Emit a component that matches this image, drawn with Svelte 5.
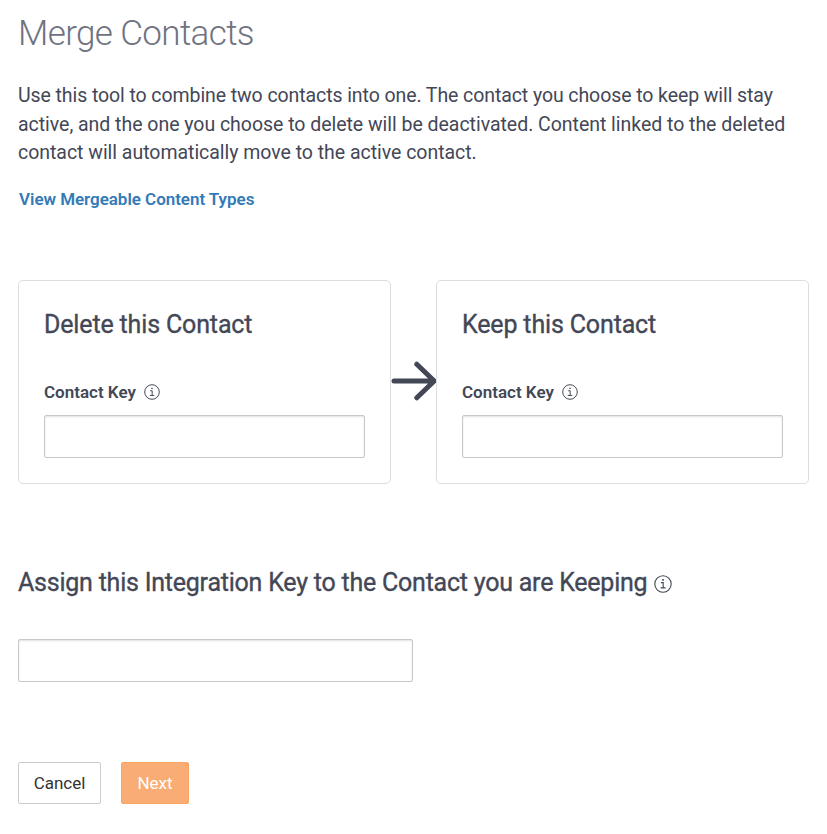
<script lang="ts">
  let integrationKey = $state('');

  const contacts = $state([
    { id: 'delete', title: 'Delete this Contact', key: '' },
    { id: 'keep', title: 'Keep this Contact', key: '' },
  ]);
</script>

{#snippet infoIcon()}
  <svg class="info" viewBox="0 0 18 18" aria-hidden="true">
    <circle cx="9" cy="9" r="8.2" />
    <path d="M6.9 7.6h2.3v5M6.6 12.9h5" />
    <path class="dot" d="M8.2 4.1h1.6v1.6H8.2z" />
  </svg>
{/snippet}

<main class="merge">
  <h1>Merge Contacts</h1>
  <p class="intro">
    <span class="lead">Use this tool to combine two contacts into one. The contact you choose to keep will stay</span>
    <span>active, and the one you choose to delete will be deactivated. Content linked to the deleted</span>
    <span>contact will automatically move to the active contact.</span>
  </p>
  <a class="types-link" href="#types">View Mergeable Content Types</a>

  <div class="cards">
    {#each contacts as contact, i}
      {#if i > 0}
        <svg class="arrow" viewBox="0 0 46 40" aria-hidden="true">
          <path d="M3 20h40M25.8 3.2 43.2 20 25.8 36.8" />
        </svg>
      {/if}
      <section class="card">
        <h2>{contact.title}</h2>
        <label for={contact.id}><span>Contact Key</span> {@render infoIcon()}</label>
        <input id={contact.id} type="text" bind:value={contact.key} />
      </section>
    {/each}
  </div>

  <h2 class="assign"><span>Assign this Integration Key to the Contact you are Keeping</span> {@render infoIcon()}</h2>
  <input class="integration" type="text" aria-label="Integration Key" bind:value={integrationKey} />

  <div class="actions">
    <button type="button" class="btn">Cancel</button>
    <button type="button" class="btn btn-primary">Next</button>
  </div>
</main>

<style>
  :global(body) {
    background: #fff;
  }

  .merge {
    box-sizing: border-box;
    width: 827px;
    height: 834px;
    padding: 13px 18px 0;
    font-family: Roboto, 'Liberation Sans', sans-serif;
    color: #434756;
  }

  h1 {
    margin: 0;
    font-size: 35px;
    line-height: 42px;
    font-weight: 300;
    letter-spacing: -0.62px;
    color: #70737f;
  }

  .intro {
    margin: 27px 0 0;
    font-size: 19.5px;
    line-height: 28.5px;
    font-weight: 400;
    letter-spacing: -0.03px;
  }

  .intro span {
    display: block;
    white-space: nowrap;
  }

  .intro .lead {
    letter-spacing: -0.085px;
  }

  .types-link {
    display: block;
    width: max-content;
    margin: 19px 0 0 1px;
    font-size: 17px;
    line-height: 24px;
    font-weight: 600;
    letter-spacing: -0.04px;
    color: #337ab7;
    text-decoration: none;
  }

  .cards {
    display: flex;
    align-items: center;
    margin-top: 69px;
  }

  .card {
    box-sizing: border-box;
    width: 373px;
    height: 204px;
    padding: 26px 25px 25px;
    border: 1px solid #ddd;
    border-radius: 5px;
  }

  .arrow {
    width: 46px;
    height: 40px;
    margin: 0 -1px 2px 0;
    flex: none;
  }

  .arrow path {
    fill: none;
    stroke: #434756;
    stroke-width: 5;
    stroke-linecap: round;
    stroke-linejoin: round;
  }

  h2 {
    margin: 0;
    font-size: 25px;
    line-height: 36px;
    font-weight: 400;
    letter-spacing: -0.15px;
    -webkit-text-stroke: 0.35px #434756;
    white-space: nowrap;
  }

  label {
    display: flex;
    align-items: center;
    gap: 8px;
    height: 24px;
    margin: 37px 0 11px;
    font-size: 17px;
    font-weight: 600;
  }

  .info {
    width: 16px;
    height: 16px;
    flex: none;
  }

  .info circle,
  .info path {
    fill: none;
    stroke: #434756;
    stroke-width: 1.1;
  }

  .info .dot {
    fill: #434756;
    stroke: none;
  }

  input {
    display: block;
    box-sizing: border-box;
    width: 100%;
    height: 43px;
    padding: 6px 12px;
    border: 1px solid #c8c8c8;
    border-radius: 2px;
    box-shadow: inset 0 1px 2px rgba(0, 0, 0, 0.12);
    outline: none;
  }

  .assign {
    display: flex;
    align-items: center;
    gap: 7px;
    margin: 81px 0 38px;
    letter-spacing: -0.225px;
  }

  .assign .info {
    width: 18px;
    height: 18px;
    margin-top: 2px;
  }

  .integration {
    width: 395px;
  }

  .actions {
    display: flex;
    gap: 20px;
    margin-top: 80px;
  }

  .btn {
    box-sizing: border-box;
    width: 83px;
    height: 42px;
    padding: 0;
    border: 1px solid #ccc;
    border-radius: 2px;
    background: #fff;
    font-family: inherit;
    font-size: 17px;
    color: #333;
  }

  .btn-primary {
    width: 68px;
    border-color: #f8a566;
    background: #f9ac73;
    color: #fff;
  }
</style>
